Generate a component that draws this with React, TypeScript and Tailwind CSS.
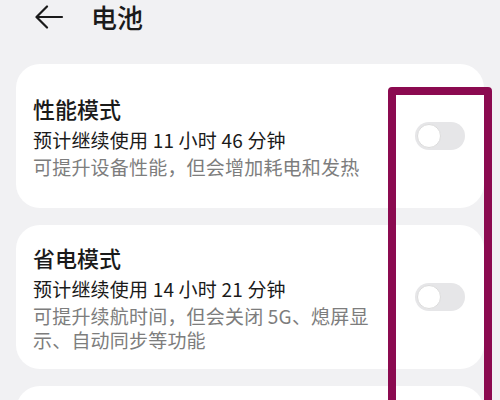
import React from "react";

function Toggle() {
  return (
    <div className="w-[50px] h-[28px] rounded-full bg-[#e6e6e8] relative shrink-0">
      <div className="absolute left-[2px] top-[2px] w-[24px] h-[24px] rounded-full bg-white border border-[#dcdcdc]" />
    </div>
  );
}

function Card({ title, est, desc }: { title: string; est: string; desc: React.ReactNode }) {
  return (
    <div className="mx-[16px] h-[144px] rounded-[24px] bg-white flex items-center justify-between pl-[17px] pr-[19px]">
      <div className="w-[360px]">
        <div className="text-[22px] leading-[30px] text-[#1a1a1a] font-medium">{title}</div>
        <div className="mt-[4px] text-[19px] leading-[26px] text-[#1a1a1a] tracking-[0.2px]">{est}</div>
        <div className="mt-[2px] text-[19px] leading-[24px] text-[#7d7d7d] tracking-[0.2px]">{desc}</div>
      </div>
      <Toggle />
    </div>
  );
}

export default function App() {
  return (
    <div
      className="w-[500px] h-[400px] overflow-hidden bg-[#f1f1f3] relative"
      style={{ fontFamily: '"Noto Sans CJK SC", "Noto Sans", sans-serif' }}
    >
      <div className="h-[34px] flex items-center pl-[35px]">
        <svg width="29" height="24" viewBox="0 0 29 24" fill="none" stroke="#1a1a1a" strokeWidth="2.2" strokeLinecap="round" strokeLinejoin="round">
          <path d="M27 12H2" />
          <path d="M12 1.5L1.5 12L12 22.5" />
        </svg>
        <div className="ml-[27px] text-[26px] leading-[34px] text-[#1a1a1a] font-medium">电池</div>
      </div>
      <div className="mt-[30px] flex flex-col gap-[17px]">
        <Card title="性能模式" est="预计继续使用 11 小时 46 分钟" desc="可提升设备性能，但会增加耗电和发热" />
        <Card title="省电模式" est="预计继续使用 14 小时 21 分钟" desc={<>可提升续航时间，但会关闭 5G、熄屏显<br />示、自动同步等功能</>} />
        <Card title="" est="" desc="" />
      </div>
      <div className="absolute left-[388px] top-[87px] w-[104px] h-[340px] border-[8px] border-[#8b0a50] rounded-[4px]" />
    </div>
  );
}
